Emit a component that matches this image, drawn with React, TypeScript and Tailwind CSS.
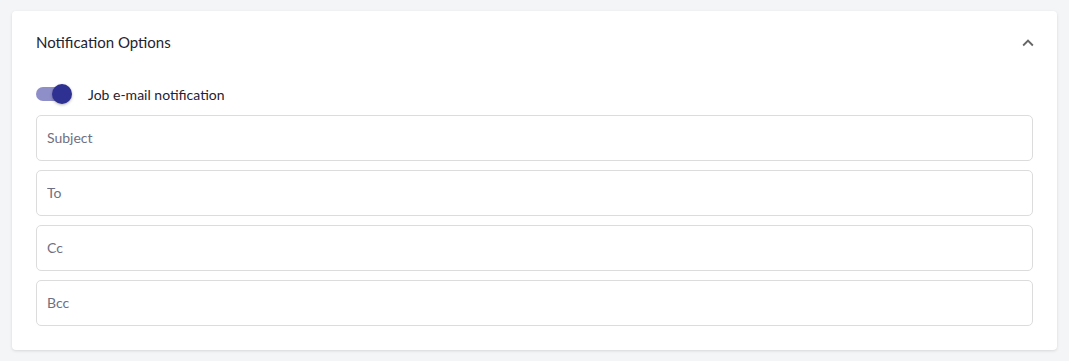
import React, { useState } from 'react';

const fields = ['Subject', 'To', 'Cc', 'Bcc'];

const App: React.FC = () => {
    const [enabled, setEnabled] = useState(true);

    return (
        <div className="min-h-screen bg-[#f4f5f7] px-3 pt-[11px] font-['Lato','Noto_Sans',sans-serif]">
            <div className="bg-white rounded-[4px] shadow-[0_1px_3px_rgba(0,0,0,0.12)] px-6 pb-[24px]">
                <div className="flex items-center justify-between h-[63px]">
                    <h2 className="text-[15px] text-[#1f2230]">Notification Options</h2>
                    <svg width="22" height="22" viewBox="0 0 24 24" className="mr-[-6px] text-[#666]">
                        <path d="M7.41 15.41 12 10.83l4.59 4.58L18 14l-6-6-6 6z" fill="currentColor" />
                    </svg>
                </div>
                <div className="flex items-center gap-[18px] h-[36px] mt-[2px] mb-[3px]">
                    <button
                        type="button"
                        onClick={() => setEnabled(!enabled)}
                        className="relative shrink-0 w-[34px] h-[14px] rounded-full bg-[#8e8ec9]"
                    >
                        <span className="absolute top-[-3px] right-[-2px] w-[20px] h-[20px] rounded-full bg-[#2f3192] shadow-[0_1px_3px_rgba(0,0,0,0.3)]" />
                    </button>
                    <span className="text-[14px] text-[#1f2230]">Job e-mail notification</span>
                </div>
                <div className="flex flex-col gap-[9px]">
                    {fields.map(f => (
                        <input
                            key={f}
                            placeholder={f}
                            className="w-full h-[46px] px-[10px] pb-[2px] border border-[#dcdcdc] rounded-[5px] text-[14px] text-[#1f2230] placeholder:text-[#6f6f82] outline-none"
                        />
                    ))}
                </div>
            </div>
        </div>
    );
};

export default App;
